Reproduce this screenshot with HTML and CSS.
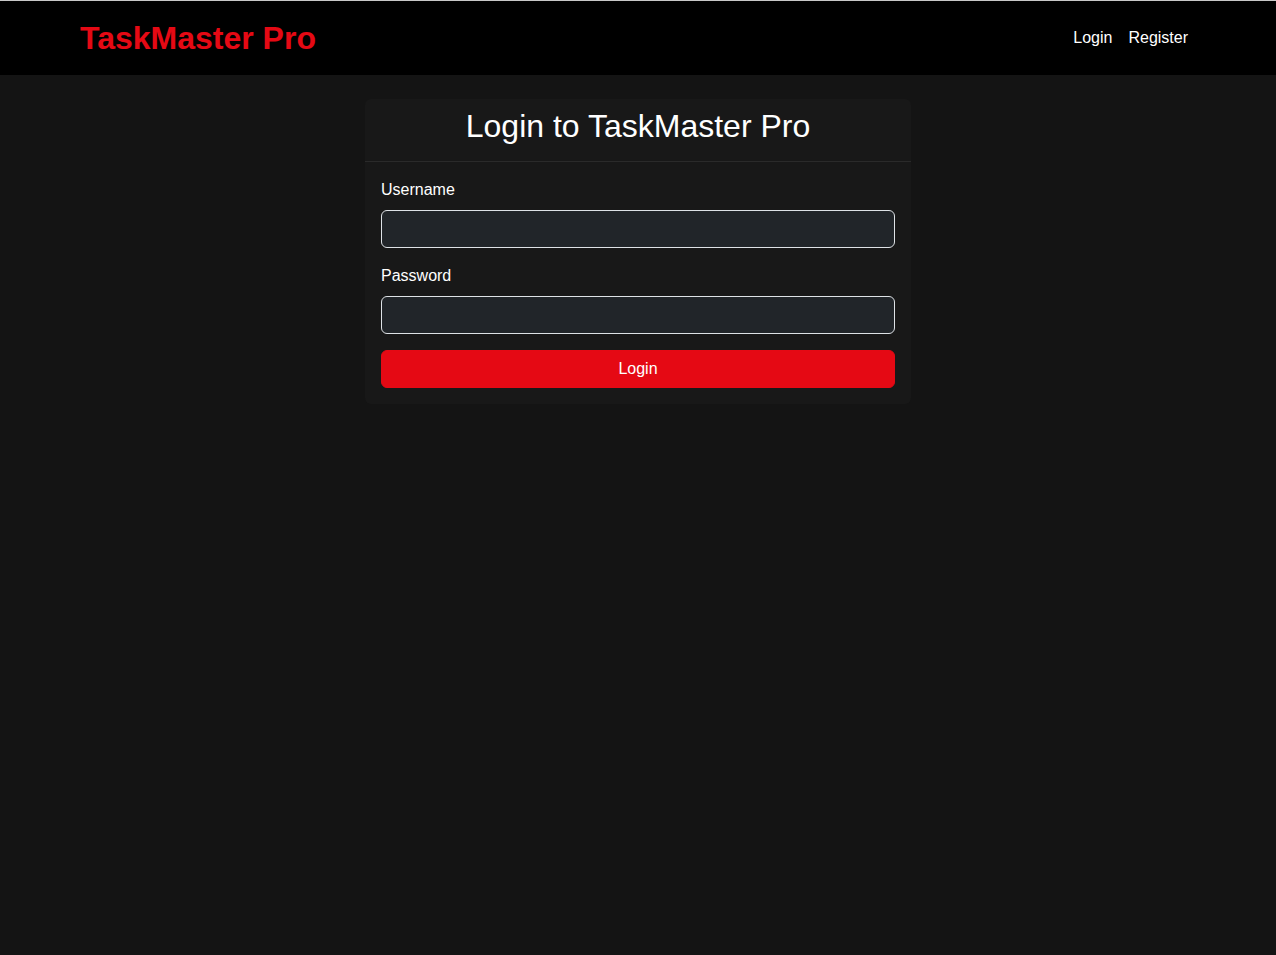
FILE: index.html
```html
<!DOCTYPE html>
<html lang="en">
<head>
<meta charset="utf-8">
<title>TaskMaster Pro - Login</title>
<link rel="stylesheet" href="styles.css">
</head>
<body>
<nav class="navbar">
  <div class="container nav-inner">
    <a class="brand" href="#">TaskMaster Pro</a>
    <ul class="nav-links">
      <li><a class="nav-link" href="#">Login</a></li>
      <li><a class="nav-link" href="#">Register</a></li>
    </ul>
  </div>
</nav>
<main class="container main">
  <div class="row">
    <div class="card">
      <div class="card-header">
        <h2 class="card-title">Login to TaskMaster Pro</h2>
      </div>
      <form class="card-body">
        <div class="field">
          <label class="label" for="username">Username</label>
          <input class="input" id="username" type="text">
        </div>
        <div class="field">
          <label class="label" for="password">Password</label>
          <input class="input" id="password" type="password">
        </div>
        <button class="btn" type="button">Login</button>
      </form>
    </div>
  </div>
</main>
</body>
</html>
```
FILE: styles.css
```css
* { box-sizing: border-box; }
html, body {
  margin: 0;
  padding: 0;
}
body {
  background: #141414;
  color: #ffffff;
  font-family: "Liberation Sans", Arial, sans-serif;
  font-size: 16px;
  line-height: 1.5;
  border-top: 1px solid #c8c8c8;
  min-height: 100vh;
}
.container {
  width: 1140px;
  margin: 0 auto;
  padding: 0 12px;
}
.navbar {
  background: #000000;
  padding: 8px 0;
}
.nav-inner {
  display: flex;
  align-items: center;
  justify-content: space-between;
}
.brand {
  color: #e50914;
  font-weight: bold;
  font-size: 32px;
  line-height: 48px;
  padding: 5px 0;
  text-decoration: none;
}
.nav-links {
  display: flex;
  list-style: none;
  margin: 0;
  padding: 0;
}
.nav-link {
  display: block;
  color: #ffffff;
  text-decoration: none;
  padding: 8px;
}
.main {
  padding-top: 24px;
}
.row {
  display: flex;
  justify-content: center;
}
.card {
  width: 546px;
  background: #181818;
  border-radius: 6px;
}
.card-header {
  padding: 8px 16px;
  border-bottom: 1px solid #2a2a2a;
  text-align: center;
}
.card-title {
  margin: 0 0 8px;
  font-size: 32px;
  font-weight: normal;
  line-height: 1.2;
}
.card-body {
  padding: 16px;
  margin: 0;
}
.field {
  margin-bottom: 16px;
}
.label {
  display: block;
  margin-bottom: 8px;
}
.input {
  display: block;
  width: 100%;
  height: 38px;
  background: #212529;
  border: 1px solid #dee2e6;
  border-radius: 6px;
  color: #ffffff;
  font: inherit;
  padding: 6px 12px;
}
.btn {
  display: block;
  width: 100%;
  height: 38px;
  background: #e50914;
  color: #ffffff;
  border: 1px solid #e50914;
  border-radius: 6px;
  font: inherit;
  padding: 6px 12px;
  cursor: pointer;
}
```
